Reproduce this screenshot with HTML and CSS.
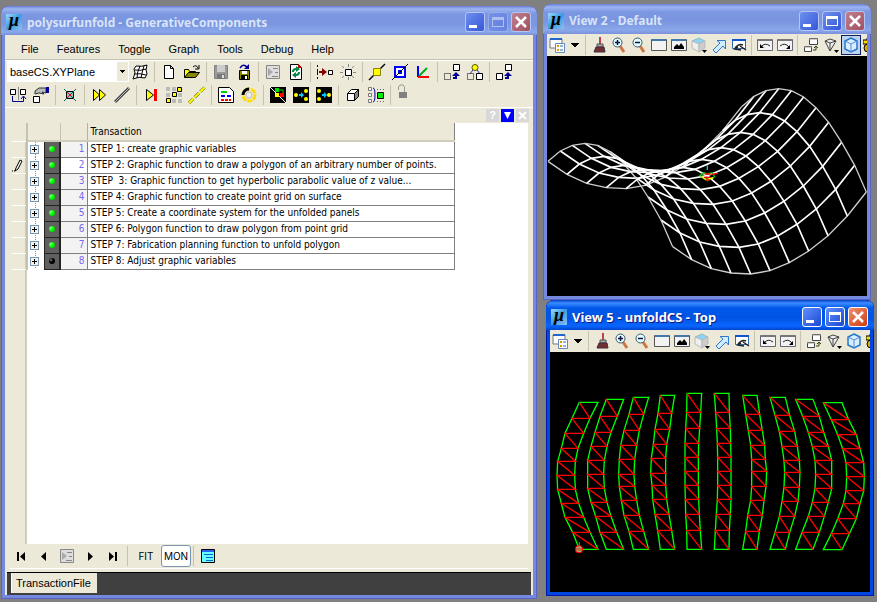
FILE: index.html
```html
<!DOCTYPE html>
<html lang="en">
  <head>
    <meta charset="UTF-8" />
    <meta name="viewport" content="width=device-width, initial-scale=1.0" />
    <title>polysurfunfold - GenerativeComponents</title>
    <link rel="stylesheet" href="styles.css">
  </head>
  <body>
    <!-- shared icons -->
    <svg class="defs" aria-hidden="true">
      <symbol id="i-attr" viewBox="0 0 16 16"><path d="M1 2h12v9H1z" fill="#fff" stroke="#777"/><path d="M1 2h12" stroke="#26c" stroke-width="2"/><path d="M6.500 6.500h9v9h-9z" fill="#fff" stroke="#68b"/><path d="M8 9h2M8 13h2" stroke="#d90" stroke-width="2"/><path d="M11 9h3M11 13h3" stroke="#26c"/></symbol>
      <symbol id="i-brush" viewBox="0 0 16 16"><path d="M8 0h2v7H8z" fill="#b44"/><path d="M6 7h6v3H6z" fill="#aaa" stroke="#555"/><path d="M5 10h8l1 5H3z" fill="#922" stroke="#334"/><path d="M6 11v3M9 11v3M12 11v3" stroke="#345"/></symbol>
      <symbol id="i-zin" viewBox="0 0 16 16"><path d="M9 9l4 6" stroke="#c74" stroke-width="3"/><circle cx="6.500" cy="5.500" r="4.500" fill="#dff" stroke="#456"/><path d="M4 5.500h5M6.500 3v5" stroke="#114" stroke-width="1.500"/></symbol>
      <symbol id="i-zout" viewBox="0 0 16 16"><path d="M9 9l4 6" stroke="#c74" stroke-width="3"/><circle cx="6.500" cy="5.500" r="4.500" fill="#dff" stroke="#456"/><path d="M4 5.500h5" stroke="#114" stroke-width="1.500"/></symbol>
      <symbol id="i-win" viewBox="0 0 16 16"><path d="M.5 2.500h15v11H.5z" fill="#f3f3f3" stroke="#555"/><path d="M1 3h14" stroke="#47a" stroke-width="2"/></symbol>
      <symbol id="i-fit" viewBox="0 0 16 16"><path d="M.5 2.500h15v11H.5z" fill="#f3f3f3" stroke="#555"/><path d="M1 3h14" stroke="#47a" stroke-width="2"/><path d="M3 12V10l3-3 2 2 2-3 3 4v2z" fill="#000"/></symbol>
      <symbol id="i-cube" viewBox="0 0 16 16"><path d="M1 4l7-3 6 3-6 3z" fill="#8cd4f5" stroke="#9bb"/><path d="M1 4l7 3v8l-7-4z" fill="#eee" stroke="#bbb"/><path d="M14 4L8 7v8l6-4z" fill="#ccc" stroke="#bbb"/><path d="M11 13h5l-2.500 3z"/></symbol>
      <symbol id="i-pan" viewBox="0 0 16 16"><path d="M2 13l7-7-3-2.500h8.500V12L12 9l-7 7z" fill="#cef" stroke="#37c"/></symbol>
      <symbol id="i-walk" viewBox="0 0 16 16"><path d="M1.500 2.500h13v9h-13z" fill="#fff" stroke="#36a"/><path d="M1 3h14" stroke="#15c" stroke-width="2"/><path d="M4 11q4-5 8-3M9 9l6 4M7 10l-3 2 6 1" fill="none" stroke="#222" stroke-width="1.500"/></symbol>
      <symbol id="i-prev" viewBox="0 0 16 16"><path d="M.5 2.500h15v11H.5z" fill="#f3f3f3" stroke="#667"/><path d="M1 3h14" stroke="#777" stroke-width="2"/><path d="M4 10q4-5 9-1" fill="none" stroke="#222"/><path d="M3 7v4h4z"/></symbol>
      <symbol id="i-next" viewBox="0 0 16 16"><path d="M.5 2.500h15v11H.5z" fill="#f3f3f3" stroke="#667"/><path d="M1 3h14" stroke="#777" stroke-width="2"/><path d="M3 9q5-4 9 1" fill="none" stroke="#222"/><path d="M13 8v4H9z"/></symbol>
      <symbol id="i-copyv" viewBox="0 0 16 16"><path d="M6.500 1.500h8v6h-8zM1.500 9.500h7v5h-7z" fill="#fff" stroke="#444"/><path d="M6 2h9M1 10h8" stroke="#999"/><path d="M10 13h3v-4M11 11l2-2 2 2" fill="none" stroke="#341"/></symbol>
      <symbol id="i-persp" viewBox="0 0 16 16"><path d="M2 4l5-2 6 2-6 10z" fill="#eee" stroke="#444"/><path d="M2 4l5 2 6-2M7 6v8" fill="none" stroke="#444"/><path d="M11 13h5l-2.500 3z"/></symbol>
      <symbol id="i-box" viewBox="0 0 16 16"><path d="M8 1l6 3v8l-6 3-6-3V4z" fill="#d9eeff" stroke="#27c" stroke-width="1.500"/><path d="M2 4l6 3 6-3M8 7v8" fill="none" stroke="#58d"/></symbol>
      <symbol id="i-clip" viewBox="0 0 16 16"><path d="M0 3h4V1h6v6H0z" fill="#fd0" stroke="#000"/><circle cx="5" cy="11" r="4" fill="#da0" stroke="#000"/></symbol>
      <symbol id="i-trans" viewBox="0 0 16 16"><path d="M1.500 1.500h13v13h-13z" fill="#ddd" stroke="#888"/><path d="M3 4l5 4-5 4z" fill="#aaa"/><path d="M8 4.500h5M10 8.500h3M7 12.500h6" stroke="#888"/></symbol>
    </svg>

    <main class="desktop">
      <section class="window app">
        <header class="titlebar">
          <span class="logo">µ</span>
          <h1>polysurfunfold - GenerativeComponents</h1>
          <button class="wbtn" aria-label="Minimize"><span class="min"></span></button>
          <button class="wbtn off" aria-label="Maximize"><span class="max"></span></button>
          <button class="wbtn close" aria-label="Close"><svg viewBox="0 0 12 12"><path d="M1 1l10 10M11 1L1 11"/></svg></button>
        </header>
        <div class="content">
          <nav class="menu">
            <button>File</button><button>Features</button><button>Toggle</button><button>Graph</button><button>Tools</button><button>Debug</button><button>Help</button>
          </nav>
          <div class="tools">
            <div class="toolrow">
              <div class="combo">
                <select aria-label="Base plane"><option>baseCS.XYPlane</option></select>
              </div>
              <button aria-label="Mesh"><svg viewBox="0 0 16 16"><path d="M4 2q6 1 11-1l-1 5 1 4-2 4q-6-2-12 1l2-6-1-4z" fill="#fff" stroke="#000"/><path d="M3 6q6 1 11-1M2 10q6-1 12 1M8 2q-3 6-3 12M12 2q-2 6-3 12" fill="none" stroke="#000"/></svg></button>
              <i class="sep"></i>
              <button aria-label="New"><svg viewBox="0 0 16 16"><path d="M3.500 1.500h6l3 3v10h-9z" fill="#fff" stroke="#000"/><path d="M9.500 1.500v3h3" fill="none" stroke="#000"/></svg></button>
              <button aria-label="Open"><svg viewBox="0 0 16 16"><path d="M.5 13.500v-8h4l1 2h6v3" fill="#ff0" stroke="#000"/><path d="M.5 13.500l4-5h11l-4 5z" fill="#880" stroke="#000"/><path d="M9 3q3-3 5 1M15 1v4h-4" fill="none" stroke="#000"/></svg></button>
              <i class="sep"></i>
              <button aria-label="Save"><svg viewBox="0 0 16 16"><path d="M1.500 1.500h13v13h-13z" fill="#999" stroke="#808080"/><path d="M4 1h8v7H4z" fill="#ccc"/><path d="M4 10h8v5H4z" fill="#777"/><path d="M9 11h2v3H9z" fill="#ddd"/></svg></button>
              <button aria-label="Save as"><svg viewBox="0 0 16 16"><path d="M3.500 6.500h10v9h-10z" fill="#880" stroke="#000"/><path d="M6 7h5v3H6z" fill="#fff"/><path d="M5 11h7v4H5z"/><path d="M9 12h2v3H9z" fill="#fff"/><path d="M4 4q3-5 7-1" fill="none" stroke="#009" stroke-width="1.500"/><path d="M13 0v5H8z" fill="#009"/></svg></button>
              <i class="sep"></i>
              <button aria-label="Transactions"><svg><use href="#i-trans"/></svg></button>
              <button aria-label="Refresh"><svg viewBox="0 0 16 16"><path d="M2.500.5h8l3 3v12h-11z" fill="#fff" stroke="#000"/><path d="M10 0l4 4h-4z" fill="#c00"/><path d="M5 8q0-3 3-3M11 8q0 3-3 3" fill="none" stroke="#084" stroke-width="2"/><path d="M8 2l4 3-4 3zM8 8l-4 3 4 3z" fill="#084"/></svg></button>
              <i class="sep"></i>
              <button aria-label="Arrow to node"><svg viewBox="0 0 16 16"><path d="M.5 1v2M.5 5v6M.5 13v2" stroke="#009"/><path d="M2 7h3V4l5 4-5 4V9H2z" fill="#800"/><path d="M11.500 6.500h4v4h-4z" fill="#fff" stroke="#000"/></svg></button>
              <button aria-label="Highlight"><svg viewBox="0 0 16 16"><path d="M8.500 0v3M8.500 13v3M0 8.500h3M13 8.500h3M2 2l2 2M12 12l2 2M2 14l2-2M12 4l2-2" stroke="#888"/><path d="M5.500 5.500h6v6h-6z" fill="#fff" stroke="#000"/></svg></button>
              <i class="sep"></i>
              <button aria-label="Point on line"><svg viewBox="0 0 16 16"><path d="M0 16L16 0" stroke="#000" stroke-width="1.500"/><path d="M4.500 4.500h7v7h-7z" fill="#ff0" stroke="#880"/></svg></button>
              <button aria-label="Plane"><svg viewBox="0 0 16 16"><path d="M3 3h10v10H3z" fill="#fff" stroke="#00f" stroke-width="2"/><path d="M6 6h4v4H6z" fill="#00f"/><path d="M0 16L16 0" stroke="#000"/></svg></button>
              <button aria-label="Coordinate system"><svg viewBox="0 0 16 16"><path d="M3 2v11" stroke="#00f" stroke-width="2"/><path d="M3 13h11" stroke="#f00" stroke-width="2"/><path d="M4 12l8-8" stroke="#0a2" stroke-width="2"/></svg></button>
              <i class="sep"></i>
              <button aria-label="Copy feature"><svg viewBox="0 0 16 16"><path d="M9.500.5h6v6h-6z" fill="#fff" stroke="#000"/><path d="M.5 9.500h6v6h-6z" fill="none" stroke="#000" stroke-dasharray="1 1"/><path d="M9 14h3V9" fill="none" stroke="#009" stroke-width="2"/><path d="M8 12l4-4 4 4z" fill="#009"/></svg></button>
              <button aria-label="Link feature"><svg viewBox="0 0 16 16"><path d="M8 3L3 10M8 3l5 7" stroke="#33c"/><circle cx="8" cy="3.500" r="3" fill="#ff0" stroke="#550"/><path d="M.5 9.500h6v6h-6z" fill="none" stroke="#000" stroke-dasharray="1 1"/><path d="M9.500 9.500h6v6h-6z" fill="#fff" stroke="#000"/></svg></button>
              <i class="sep"></i>
              <button aria-label="Replace feature"><svg viewBox="0 0 16 16"><path d="M9.500.5h6v6h-6zM.5 9.500h6v6h-6z" fill="#fff" stroke="#000"/><path d="M9 14h3v-4" fill="none" stroke="#009" stroke-width="2"/><path d="M8 12l4-4 4 4z" fill="#009"/></svg></button>
            </div>
            <div class="toolrow">
              <button aria-label="Mirror"><svg viewBox="0 0 16 16"><path d="M.5 2.500h5v5h-5zM10.500 2.500h5v5h-5z" fill="#fff" stroke="#000"/><path d="M8.500 0v13" stroke="#888"/><path d="M2.500 9v5.500h11V10M11 12l2.500-3 2.500 3" fill="none" stroke="#009"/></svg></button>
              <button aria-label="Pick"><svg viewBox="0 0 16 16"><path d="M2 4l4-3h7v5l-4-1 2 2-5-1-4 1z" fill="#bbb" stroke="#333"/><path d="M13 0h3v6h-3z" fill="#009"/><path d="M.5 9.500h6v6h-6z" fill="#fff" stroke="#000"/></svg></button>
              <i class="sep"></i>
              <button aria-label="Delete feature"><svg viewBox="0 0 16 16"><path d="M4.500 4.500h7v7h-7z" fill="#8cc" stroke="#000"/><path d="M2 2l12 12M14 2L2 14" stroke="#066"/><path d="M6 6l4 4M10 6l-4 4" stroke="#e00"/></svg></button>
              <i class="sep"></i>
              <button aria-label="Play forward"><svg viewBox="0 0 16 16"><path d="M2.500 2.500l6 5.500-6 5.500zM8.500 2.500l6 5.500-6 5.500z" fill="#ff0" stroke="#000"/></svg></button>
              <button aria-label="Line"><svg viewBox="0 0 16 16"><path d="M1 15L15 1" stroke="#444" stroke-width="3"/><path d="M1 15L15 1" stroke="#bbb" stroke-width="1"/></svg></button>
              <i class="sep"></i>
              <button aria-label="Play to end"><svg viewBox="0 0 16 16"><path d="M3.500 2.500l7 5.500-7 5.500z" fill="#ff0" stroke="#000"/><path d="M11 2h3v12h-3z" fill="#f00"/></svg></button>
              <button aria-label="Pattern"><svg viewBox="0 0 16 16"><path d="M0 0h4v4H0zM6 0h4v4H6zM0 6h4v4H0zM12 6h4v4h-4zM6 12h4v4H6zM12 12h4v4h-4z" fill="#bbb"/><path d="M11.500.5h4v4h-4zM6.500 5.500h4v4h-4zM.5 11.500h4v4h-4z" fill="#ff0" stroke="#000"/></svg></button>
              <button aria-label="Dashed line"><svg viewBox="0 0 16 16"><path d="M0 16L16 0" stroke="#660" stroke-width="3" stroke-dasharray="6 2"/><path d="M0 16L16 0" stroke="#ff0" stroke-width="2" stroke-dasharray="6 2"/></svg></button>
              <i class="sep"></i>
              <button aria-label="Script"><svg viewBox="0 0 16 16"><path d="M.5.5h11l4 4v11H.5z" fill="#fff" stroke="#000"/><path d="M3 5h6" stroke="#0c0" stroke-width="2"/><path d="M3 9h10" stroke="#00f" stroke-dasharray="4 2" stroke-width="2"/><path d="M3 13h10" stroke="#f00" stroke-width="2" stroke-dasharray="3 1"/></svg></button>
              <button aria-label="Cycle"><svg viewBox="0 0 16 16"><circle cx="8" cy="8" r="6" fill="none" stroke="#fd0" stroke-width="3" stroke-dasharray="5 1"/><path d="M2 8a6 6 0 0 1 6-6" fill="none" stroke="#000" stroke-width="3"/><circle cx="8" cy="8" r="3" fill="#eee" stroke="#bbb"/></svg></button>
              <i class="sep"></i>
              <button aria-label="Graph view"><svg viewBox="0 0 16 16"><path d="M0 0h16v16H0z"/><path d="M0 0l16 16" stroke="#fff"/><path d="M6 3h7v4" fill="none" stroke="#0c0"/><path d="M5 1h4v4H5z" fill="#0d0"/><path d="M5 6h4v4H5z" fill="#ff0"/><path d="M10 6h4v4h-4z" fill="#f00"/></svg></button>
              <button aria-label="Expand graph"><svg viewBox="0 0 16 16"><path d="M0 0h16v16H0z"/><circle cx="3" cy="8" r="2" fill="#ff0"/><circle cx="13" cy="4" r="2" fill="#ff0"/><circle cx="13" cy="12" r="2" fill="#ff0"/><path d="M6 7h2V5l3 3-3 3V9H6z" fill="#0cf"/></svg></button>
              <button aria-label="Collapse graph"><svg viewBox="0 0 16 16"><path d="M0 0h16v16H0z"/><circle cx="13" cy="8" r="2" fill="#ff0"/><circle cx="3" cy="4" r="2" fill="#ff0"/><circle cx="3" cy="12" r="2" fill="#ff0"/><path d="M6 7h2V5l3 3-3 3V9H6z" fill="#0cf"/></svg></button>
              <i class="sep"></i>
              <button aria-label="Solid"><svg viewBox="0 0 16 16"><path d="M2.500 6.500l4-4h7v7l-4 4h-7z" fill="#fff" stroke="#000"/><path d="M9.500 6.500l4-4v7l-4 4z" fill="#888" stroke="#000"/><path d="M2.500 6.500h7" stroke="#000"/></svg></button>
              <button aria-label="Group"><svg viewBox="0 0 16 16"><path d="M.5.5h3v3h-3zM.5 6.500h3v3h-3zM.5 12.500h3v3h-3z" fill="#fff" stroke="#777"/><path d="M5 1q2 0 2 7t-2 7" fill="none" stroke="#009"/><path d="M9 2.500h7M9 14.500h7" stroke="#666" stroke-dasharray="1 2"/><path d="M9.500 5.500h6v6h-6z" fill="#0e0" stroke="#000"/></svg></button>
              <i class="sep"></i>
              <button aria-label="Lock" disabled><svg viewBox="0 0 16 16"><path d="M2 5h8v6H2z" fill="#808080"/><path d="M1.500 3V0L3 -2h3L7.500 0v5" fill="none" stroke="#999"/></svg></button>
            </div>
          </div>
          <div class="dock">
            <button class="help" aria-label="Help">?</button>
            <button class="drop" aria-label="Options"><svg viewBox="0 0 13 13"><path d="M3 3h7L6.500 10z" fill="#fff"/></svg></button>
            <button class="shut" aria-label="Close panel"><svg viewBox="0 0 13 13"><path d="M3 3l7 7M10 3l-7 7" stroke="#fff" stroke-width="2"/></svg></button>
          </div>
          <div class="panel">
            <table>
              <thead>
                <tr><th class="gut"></th><th class="tree"></th><th class="led"></th><th class="num"></th><th class="txt">Transaction</th></tr>
              </thead>
              <tbody>
                <tr><td class="gut"></td><td class="tree"><button aria-label="Expand"></button></td><td class="led"><i></i></td><td class="num">1</td><td class="txt">STEP 1: create graphic variables</td></tr>
                <tr class="current"><td class="gut"><svg viewBox="0 0 12 14"><path d="M4 10l4-8 2 1-4 8-3 2z" fill="#fff" stroke="#000"/><path d="M0 13h4" stroke="#000" stroke-dasharray="1 1"/></svg></td><td class="tree"><button aria-label="Expand"></button></td><td class="led"><i></i></td><td class="num">2</td><td class="txt">STEP 2: Graphic function to draw a polygon of an arbitrary number of points.</td></tr>
                <tr><td class="gut"></td><td class="tree"><button aria-label="Expand"></button></td><td class="led"><i></i></td><td class="num">3</td><td class="txt">STEP&nbsp; 3: Graphic function to get hyperbolic parabolic value of z value...</td></tr>
                <tr><td class="gut"></td><td class="tree"><button aria-label="Expand"></button></td><td class="led"><i></i></td><td class="num">4</td><td class="txt">STEP 4: Graphic function to create point grid on surface</td></tr>
                <tr><td class="gut"></td><td class="tree"><button aria-label="Expand"></button></td><td class="led"><i></i></td><td class="num">5</td><td class="txt">STEP 5: Create a coordinate system for the unfolded panels</td></tr>
                <tr><td class="gut"></td><td class="tree"><button aria-label="Expand"></button></td><td class="led"><i></i></td><td class="num">6</td><td class="txt">STEP 6: Polygon function to draw polygon from point grid</td></tr>
                <tr><td class="gut"></td><td class="tree"><button aria-label="Expand"></button></td><td class="led"><i></i></td><td class="num">7</td><td class="txt">STEP 7: Fabrication planning function to unfold polygon</td></tr>
                <tr class="pending"><td class="gut"></td><td class="tree"><button aria-label="Expand"></button></td><td class="led"><i></i></td><td class="num">8</td><td class="txt">STEP 8: Adjust graphic variables</td></tr>
              </tbody>
            </table>
          </div>
          <div class="player">
            <button aria-label="First"><svg viewBox="0 0 16 16"><path d="M4 4h2v9H4zM12 4v9L7 8.500z"/></svg></button>
            <button aria-label="Previous"><svg viewBox="0 0 16 16"><path d="M10 4v9L5 8.500z"/></svg></button>
            <button aria-label="Record" disabled><svg><use href="#i-trans"/></svg></button>
            <button aria-label="Play"><svg viewBox="0 0 16 16"><path d="M6 4v9l5-4.500z"/></svg></button>
            <button aria-label="Last"><svg viewBox="0 0 16 16"><path d="M4 4v9l5-4.500zM10 4h2v9h-2z"/></svg></button>
            <i class="sep"></i>
            <button class="word">FIT</button>
            <button class="word on">MON</button>
            <i class="sep"></i>
            <button aria-label="List"><svg viewBox="0 0 16 16"><path d="M1.500 1.500h13v13h-13z" fill="#6ff" stroke="#000"/><path d="M2 3h12" stroke="#26f" stroke-width="2"/><path d="M4 6.500h9M6 9.500h7M6 12.500h7" stroke="#06c"/></svg></button>
          </div>
          <div class="tabs"><button>TransactionFile</button></div>
        </div>
      </section>

      <div class="views">
        <section class="window">
          <header class="titlebar">
            <span class="logo">µ</span>
            <h2>View 2 - Default</h2>
            <button class="wbtn" aria-label="Minimize"><span class="min"></span></button>
            <button class="wbtn" aria-label="Maximize"><span class="max"></span></button>
            <button class="wbtn close" aria-label="Close"><svg viewBox="0 0 12 12"><path d="M1 1l10 10M11 1L1 11"/></svg></button>
          </header>
          <div class="content">
            <div class="viewtools">
              <button aria-label="View attributes"><svg><use href="#i-attr"/></svg></button>
              <button class="more" aria-label="More"></button>
              <i class="sep"></i>
              <button aria-label="Update view"><svg><use href="#i-brush"/></svg></button>
              <button aria-label="Zoom in"><svg><use href="#i-zin"/></svg></button>
              <button aria-label="Zoom out"><svg><use href="#i-zout"/></svg></button>
              <button aria-label="Window area"><svg><use href="#i-win"/></svg></button>
              <button aria-label="Fit view"><svg><use href="#i-fit"/></svg></button>
              <button aria-label="Rotate view"><svg><use href="#i-cube"/></svg></button>
              <button aria-label="Pan view"><svg><use href="#i-pan"/></svg></button>
              <button aria-label="Walk"><svg><use href="#i-walk"/></svg></button>
              <i class="sep"></i>
              <button aria-label="View previous"><svg><use href="#i-prev"/></svg></button>
              <button aria-label="View next"><svg><use href="#i-next"/></svg></button>
              <i class="sep"></i>
              <button aria-label="Copy view"><svg><use href="#i-copyv"/></svg></button>
              <button aria-label="Perspective"><svg><use href="#i-persp"/></svg></button>
              <button class="on" aria-label="Display style"><svg><use href="#i-box"/></svg></button>
              <button aria-label="Clip volume"><svg><use href="#i-clip"/></svg></button>
            </div>
            <svg class="canvas" viewBox="21 -12 960 720" role="img" aria-label="Hyperbolic surface grid">
              <defs>
                <polyline id="sag" points="0,0 57,39 116,66 175,79 234,82 292,72 350,48 408,13 466,-33 524,-92 581,-164"/>
                <polyline id="arch" points="0,0 37,-31 73,-48 111,-54 149,-48 186,-29 223,3 261,47 300,107 339,176 374,256"/>
              </defs>
              <g class="mesh">
                <use href="#sag" x="24" y="304" class="edge"/>
                <use href="#sag" x="61" y="273"/>
                <use href="#sag" x="97" y="256"/>
                <use href="#sag" x="135" y="250"/>
                <use href="#sag" x="173" y="256"/>
                <use href="#sag" x="210" y="275"/>
                <use href="#sag" x="247" y="307"/>
                <use href="#sag" x="285" y="351"/>
                <use href="#sag" x="324" y="411"/>
                <use href="#sag" x="363" y="480"/>
                <use href="#sag" x="398" y="560" class="edge"/>
                <use href="#arch" x="24" y="304" class="edge"/>
                <use href="#arch" x="81" y="343"/>
                <use href="#arch" x="140" y="370"/>
                <use href="#arch" x="199" y="383"/>
                <use href="#arch" x="258" y="386"/>
                <use href="#arch" x="316" y="376"/>
                <use href="#arch" x="374" y="352"/>
                <use href="#arch" x="432" y="317"/>
                <use href="#arch" x="490" y="271"/>
                <use href="#arch" x="548" y="212"/>
                <use href="#arch" x="605" y="140" class="edge"/>
              </g>
              <g fill="none" stroke-width="4">
                <path d="M502 316v14" stroke="#0cc"/>
                <path d="M480 346l12-8 10 4 14-4 8 12-12 6-10 6-10-6z" stroke="#0c0"/>
                <path d="M484 350l14 8 22-4" stroke="#ff0"/>
                <path d="M494 342h18M492 352h20M498 360h10M514 344l20-4" stroke="#f00"/>
              </g>
            </svg>
          </div>
        </section>

        <section class="window active">
          <header class="titlebar">
            <span class="logo">µ</span>
            <h2>View 5 - unfoldCS - Top</h2>
            <button class="wbtn" aria-label="Minimize"><span class="min"></span></button>
            <button class="wbtn" aria-label="Maximize"><span class="max"></span></button>
            <button class="wbtn close" aria-label="Close"><svg viewBox="0 0 12 12"><path d="M1 1l10 10M11 1L1 11"/></svg></button>
          </header>
          <div class="content">
            <div class="viewtools">
              <button aria-label="View attributes"><svg><use href="#i-attr"/></svg></button>
              <button class="more" aria-label="More"></button>
              <i class="sep"></i>
              <button aria-label="Update view"><svg><use href="#i-brush"/></svg></button>
              <button aria-label="Zoom in"><svg><use href="#i-zin"/></svg></button>
              <button aria-label="Zoom out"><svg><use href="#i-zout"/></svg></button>
              <button aria-label="Window area"><svg><use href="#i-win"/></svg></button>
              <button aria-label="Fit view"><svg><use href="#i-fit"/></svg></button>
              <button aria-label="Rotate view"><svg><use href="#i-cube"/></svg></button>
              <button aria-label="Pan view"><svg><use href="#i-pan"/></svg></button>
              <button aria-label="Walk"><svg><use href="#i-walk"/></svg></button>
              <i class="sep"></i>
              <button aria-label="View previous"><svg><use href="#i-prev"/></svg></button>
              <button aria-label="View next"><svg><use href="#i-next"/></svg></button>
              <i class="sep"></i>
              <button aria-label="Copy view"><svg><use href="#i-copyv"/></svg></button>
              <button aria-label="Perspective"><svg><use href="#i-persp"/></svg></button>
              <button aria-label="Display style"><svg><use href="#i-box"/></svg></button>
              <button aria-label="Clip volume"><svg><use href="#i-clip"/></svg></button>
            </div>
            <svg class="canvas" viewBox="30 -84 960 720" role="img" aria-label="Unfolded panel strips">
              <g class="strips">
                <g id="s1">
                  <polygon points="118,67 96,115 75,160 64,205 53,244 51,286 53,328 64,370 75,412 98,457 118,508 174,508 150,457 131,412 116,370 106,328 104,286 106,244 114,205 131,160 150,115 174,67"/>
                  <polyline points="118,67 150,115 96,115 131,160 75,160 114,205 64,205 106,244 53,244 104,286 51,286 106,328 53,328 116,370 64,370 131,412 75,412 150,457 98,457 174,508"/>
                </g>
                <g id="s2">
                  <polygon points="199,58 180,109 165,157 153,199 143,241 143,283 143,325 153,367 167,409 180,457 199,508 251,508 230,457 213,409 201,367 193,325 191,283 193,241 201,199 213,157 232,109 251,58"/>
                  <polyline points="199,58 232,109 180,109 213,157 165,157 201,199 153,199 193,241 143,241 191,283 143,283 193,325 143,325 201,367 153,367 213,409 167,409 230,457 180,457 251,508"/>
                </g>
                <g id="s3">
                  <polygon points="280,52 267,103 252,151 242,196 238,238 236,283 238,319 244,361 252,406 267,454 280,508 326,508 311,454 298,406 290,361 284,319 282,283 284,238 290,196 298,151 311,103 326,52"/>
                  <polyline points="280,52 311,103 267,103 298,151 252,151 290,196 242,196 284,238 238,238 282,283 236,283 284,319 238,319 290,361 244,361 298,406 252,406 311,454 267,454 326,508"/>
                </g>
                <g id="s4">
                  <polygon points="361,46 354,100 345,148 340,193 334,235 332,280 336,316 338,358 345,403 353,451 361,508 404,508 395,451 387,403 380,358 377,316 377,280 377,235 380,193 389,148 395,100 404,46"/>
                  <polyline points="361,46 395,100 354,100 389,148 345,148 380,193 340,193 377,235 334,235 377,280 332,280 377,316 336,316 380,358 338,358 387,403 345,403 395,451 353,451 404,508"/>
                </g>
                <g id="s5">
                  <polygon points="441,40 440,97 437,145 435,190 435,232 435,274 435,316 436,358 437,403 440,451 441,508 485,508 481,451 478,403 476,358 475,316 475,274 475,232 476,190 479,145 482,97 485,40"/>
                  <polyline points="441,40 482,97 440,97 479,145 437,145 476,190 435,190 475,232 435,232 475,274 435,274 475,316 435,316 476,358 436,358 478,403 437,403 481,451 440,451 485,508"/>
                </g>
                <use href="#s5" transform="rotate(180 504 274)"/>
                <use href="#s4" transform="rotate(180 506 277)"/>
                <use href="#s3" transform="rotate(180 508 280)"/>
                <use href="#s2" transform="rotate(180 509 283)"/>
                <use href="#s1" transform="rotate(180 512 288)"/>
              </g>
              <path d="M118 486v20" stroke="#0c0" stroke-width="3"/>
              <circle cx="117" cy="508" r="12" fill="#f00"/>
              <path d="M111 501h12v13h-12zM117 501v13" fill="none" stroke="#8c8" stroke-width="3"/>
            </svg>
          </div>
        </section>
      </div>
    </main>
  </body>
</html>
```
FILE: styles.css
```css
* {
  box-sizing: border-box;
}
body {
  margin: 0;
  background: #808080;
  font: 11px "Liberation Sans", Arial, sans-serif;
  color: #000;
}
button {
  font: inherit;
  color: inherit;
  background: none;
  border: 0;
  padding: 0;
}
.defs {
  display: none;
}
.desktop {
  display: grid;
  grid-template-columns: 1fr 331px;
  gap: 6px;
  height: 100vh;
  padding: 4px 3px 3px 1px;
}

/* windows */
.window {
  display: flex;
  flex-direction: column;
  min-width: 0;
  padding: 0 4px 4px;
  background: #7588e0;
  border-radius: 8px 8px 0 0;
  box-shadow: inset 0 0 0 1px #5a63c4;
  overflow: hidden;
}
.app {
  margin-top: 2px;
}
.active {
  background: #0046e0;
  box-shadow: inset 0 0 0 1px #0019a8;
}
.titlebar {
  display: flex;
  align-items: center;
  gap: 3px;
  flex: 0 0 30px;
  margin: 0 -4px;
  padding: 3px 6px 0 5px;
  border-radius: 8px 8px 0 0;
  background: linear-gradient(#6a7fd8, #9db4f0 3px, #7c97e2 8px, #7b95e0 18px, #8aa8ea 26px, #7a90dc);
  color: #d8e4f8;
}
.app .titlebar {
  flex-basis: 29px;
}
.active .titlebar {
  background: linear-gradient(#0040c8, #3c8cff 3px, #0058ea 8px, #0054e3 18px, #0866ff 26px, #0044cc);
  color: #fff;
  text-shadow: 1px 1px #0a1883;
}
.titlebar h1,
.titlebar h2 {
  flex: 1;
  margin: 0;
  padding-left: 2px;
  font: bold 12px "Noto Sans", sans-serif;
  white-space: nowrap;
}
.active h2 {
  font-size: 13px;
}
.logo {
  width: 16px;
  height: 16px;
  background: linear-gradient(135deg, #9cd8ff, #3a9be0 50%, #8fc0f0);
  color: #000;
  font: italic bold 18px/13px "Liberation Serif", serif;
  text-align: center;
  text-shadow: none;
}
.wbtn {
  display: grid;
  place-items: center;
  width: 20px;
  height: 20px;
  border: 1px solid #b4c6f4;
  border-radius: 3px;
  background: linear-gradient(135deg, #6f8fee, #3358d8);
}
.wbtn.off {
  opacity: 0.4;
}
.wbtn.close {
  background: linear-gradient(135deg, #c08090, #a05060);
}
.active .wbtn {
  border-color: #fff;
  background: linear-gradient(135deg, #6090ff, #1c48d0);
}
.active .wbtn.close {
  background: linear-gradient(135deg, #f09070, #d03c10);
}
.wbtn svg {
  width: 12px;
  height: 12px;
  stroke: #fff;
  stroke-width: 2.5;
}
.min {
  width: 8px;
  height: 3px;
  margin: 9px 4px 0 0;
  background: #fff;
}
.max {
  width: 12px;
  height: 10px;
  border: 1px solid #fff;
  border-top-width: 3px;
}
.content {
  display: flex;
  flex-direction: column;
  flex: 1;
  min-height: 0;
  background: #ece9d8;
}

/* menu and toolbars */
.menu {
  display: flex;
  gap: 18px;
  height: 25px;
  padding: 4px 16px 0;
  border-bottom: 1px solid #c5c2b0;
}
.tools {
  padding: 0 2px;
  border-top: 1px solid #fff;
  border-bottom: 1px solid #fff;
}
.toolrow {
  display: flex;
  align-items: flex-start;
  height: 23px;
}
.toolrow button {
  width: 23px;
  height: 22px;
}
.toolrow svg,
.viewtools svg,
.player svg {
  display: block;
  width: 16px;
  height: 16px;
  margin: auto;
  overflow: visible;
}
.toolrow svg,
.player svg {
  margin: 0 3px;
}
.sep {
  width: 1px;
  height: 20px;
  margin: 1px 3px 1px 2px;
  background: #c5c2b0;
}
.combo {
  position: relative;
  width: 122px;
  height: 21px;
  background: #fff;
}
.combo select {
  width: 100%;
  height: 100%;
  padding: 0 3px;
  border: 0;
  appearance: none;
  background: none;
  font: inherit;
}
.combo::after {
  content: "";
  position: absolute;
  right: 1px;
  top: 1px;
  width: 11px;
  height: 19px;
  background: linear-gradient(#000, #000) 3px 8px / 5px 1px no-repeat,
    linear-gradient(#000, #000) 4px 9px / 3px 1px no-repeat,
    linear-gradient(#000, #000) 5px 10px / 1px 1px no-repeat, #ece9d8;
  pointer-events: none;
}
.dock {
  display: flex;
  justify-content: flex-end;
  gap: 2px;
  padding: 1px 4px 1px;
}
.dock button {
  width: 13px;
  height: 13px;
  background: #d8d8d8;
  color: #fff;
  font-weight: bold;
  line-height: 13px;
}
.dock .drop {
  background: #00f;
}
.dock svg {
  display: block;
}

/* transaction list */
.panel {
  flex: 1;
  margin: 0 5px 0 7px;
  background: linear-gradient(90deg, #ece9d8 13px, #c5c2b0 13px, #ddd9c8 15px, #fff 15px);
}
table {
  width: 443px;
  table-layout: fixed;
  border-collapse: collapse;
  font: 10px "DejaVu Sans Condensed", Lato, sans-serif;
}
th,
td {
  height: 16px;
  padding: 0;
  line-height: 14px;
  white-space: nowrap;
  overflow: hidden;
}
th {
  height: 18px;
  background: #ece9d8;
  border-bottom: 2px solid #d0cdbc;
  font-weight: normal;
}
th.led {
  border-right: 1px solid #c5c2b0;
}
th.txt {
  border-left: 1px solid #b5b2a0;
  border-right: 1px solid #808080;
}
.gut {
  width: 15px;
}
td.gut {
  border-bottom: 1px solid #fff;
  border-right: 2px solid #c5c2b0;
}
th.gut {
  border-bottom: 1px solid #fff;
  border-right: 2px solid #c5c2b0;
}
.gut svg {
  display: block;
  width: 12px;
  height: 14px;
}
.tree {
  width: 17px;
}
.tree button {
  display: block;
  width: 9px;
  height: 9px;
  margin: 0 0 0 2px;
  border: 1px solid #7898b5;
  background: linear-gradient(#000, #000) 1px 3px / 5px 1px no-repeat,
    linear-gradient(#000, #000) 3px 1px / 1px 5px no-repeat, #f4f2ea;
}
td.tree {
  background: repeating-linear-gradient(#888 0 1px, transparent 1px 2px) 7px 0 / 1px 100% no-repeat;
}
.led {
  width: 16px;
}
td.led {
  background: #606060;
  border: 1px solid #222;
  border-width: 0 2px 1px 1px;
}
.led i {
  display: block;
  width: 6px;
  height: 6px;
  margin: 0 auto;
  border-radius: 50%;
  background: radial-gradient(circle at 2px 2px, #9f9, #0f0 40%, #0c0);
}
.pending .led i {
  background: radial-gradient(circle at 2px 2px, #777, #000 40%);
}
.num {
  width: 27px;
}
td.num {
  padding-right: 2px;
  text-align: right;
  color: #7b68ee;
  background: #f3f3f3;
  border: 1px solid #808080;
}
.current td.num {
  background: #fff;
}
.txt {
  padding-left: 3px;
  text-align: left;
}
td.txt {
  border: 1px solid #808080;
}

/* bottom bars */
.player {
  display: flex;
  align-items: center;
  height: 25px;
  margin: 0 5px;
  border-bottom: 1px solid #fff;
}
.player button {
  width: 23px;
  height: 22px;
}
.player .word {
  width: 30px;
  font: 10px Inter, sans-serif;
}
.player .on {
  border: 1px solid #7898b5;
  border-radius: 3px;
  background: #fff;
}
.tabs {
  height: 23px;
  margin: 3px 2px 0;
  padding-left: 4px;
  background: #404040;
  border-top: 1px solid #000;
}
.tabs button {
  height: 20px;
  padding: 0 6px 0 4px;
  background: #ece9d8;
  border-left: 1px solid #fff;
}

/* views */
.views {
  display: grid;
  grid-template-rows: 296px 296px;
}
.views .window {
  margin-right: 3px;
}
.views .active {
  margin: 0 0 0 3px;
}
.viewtools {
  display: flex;
  align-items: center;
  height: 22px;
  overflow: hidden;
}
.viewtools button {
  flex: 0 0 20px;
  height: 20px;
}
.viewtools .sep {
  flex: 0 0 1px;
}
.viewtools .more {
  flex-basis: 16px;
  background: linear-gradient(#000, #000) 4px 8px / 8px 1px no-repeat,
    linear-gradient(#000, #000) 5px 9px / 6px 1px no-repeat,
    linear-gradient(#000, #000) 6px 10px / 4px 1px no-repeat,
    linear-gradient(#000, #000) 7px 11px / 2px 1px no-repeat;
}
.viewtools .on {
  border: 1px solid #0a246a;
  background: #c1d2ee;
}
.canvas {
  display: block;
  flex: 1;
  width: 100%;
  min-height: 0;
  background: #000;
}
.mesh {
  fill: none;
  stroke: #fff;
  stroke-width: 5;
}
.mesh .edge {
  stroke: #ccc;
  stroke-width: 4;
}
.strips {
  fill: none;
  stroke-width: 4;
}
.strips polygon {
  stroke: #0f0;
}
.strips polyline {
  stroke: #f00;
}
```
